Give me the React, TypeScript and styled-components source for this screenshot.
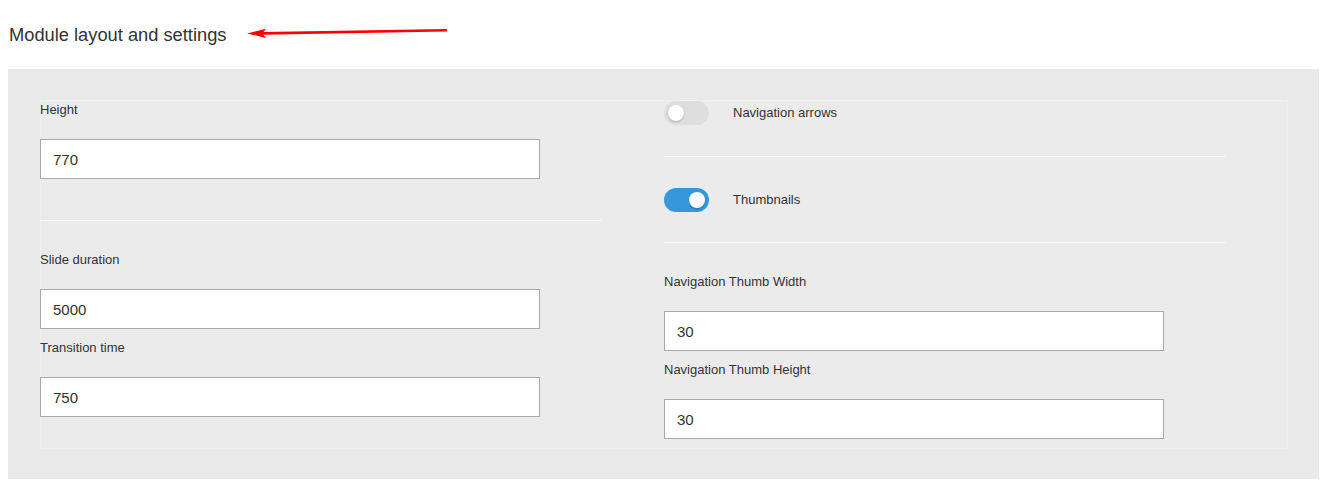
import React from "react";
import styled, { createGlobalStyle } from "styled-components";

const GlobalStyle = createGlobalStyle`
  html, body {
    margin: 0;
    padding: 0;
    background: #ffffff;
  }
  body {
    font-family: "Liberation Sans", Arial, Helvetica, sans-serif;
    color: #333333;
  }
`;

const Page = styled.div`
  padding: 24px 16px 0 8px;
`;

const HeaderRow = styled.div`
  display: flex;
  align-items: flex-start;
  margin-bottom: 24px;
`;

const Title = styled.h2`
  margin: 0;
  font-size: 18.3px;
  line-height: 21px;
  font-weight: 400;
  color: #333333;
  padding-left: 1px;
`;

const ArrowSvg = styled.svg`
  display: block;
  margin-top: 3px;
  margin-left: 20px;
  flex: none;
`;

const OuterPanel = styled.section`
  background: #e9e9e9;
  padding: 31px 31px 30px 32px;
`;

const InnerPanel = styled.div`
  background: #ebebeb;
  box-shadow: inset 0 0 0 1px #efefef;
  display: grid;
  grid-template-columns: 1fr 1fr;
  align-items: start;
  padding-bottom: 1px;
`;

const Column = styled.div`
  padding-right: 62px;
  display: flex;
  flex-direction: column;
`;

const Field = styled.div`
  display: flex;
  flex-direction: column;
  margin-bottom: 9px;
`;

const Label = styled.label`
  font-size: 13px;
  line-height: 20px;
  color: #333333;
  margin-bottom: 19px;
`;

const TextInput = styled.input`
  box-sizing: border-box;
  width: 500px;
  height: 40px;
  border: 1px solid #a9a9a9;
  border-radius: 0;
  background: #ffffff;
  padding: 0 12px;
  font-family: "Liberation Sans", Arial, Helvetica, sans-serif;
  font-size: 15px;
  color: #333333;
  outline: none;
`;

const Divider = styled.hr<{ $top: number; $bottom: number }>`
  border: none;
  height: 1px;
  background: #f7f7f7;
  margin: ${(p) => p.$top}px 0 ${(p) => p.$bottom}px;
  width: 100%;
`;

const ToggleRow = styled.div`
  display: flex;
  align-items: center;
  height: 25px;
  gap: 24px;
`;

const Switch = styled.span<{ $on: boolean }>`
  position: relative;
  display: inline-block;
  width: 45px;
  height: 24px;
  border-radius: 12px;
  background: ${(p) => (p.$on ? "#3498db" : "#dedede")};
  flex: none;

  &::after {
    content: "";
    position: absolute;
    top: 4px;
    left: ${(p) => (p.$on ? "25px" : "4px")};
    width: 16px;
    height: 16px;
    border-radius: 50%;
    background: #ffffff;
    box-shadow: 0 1px 2px rgba(0, 0, 0, 0.25);
  }
`;

const ToggleLabel = styled.span`
  font-size: 13px;
  line-height: 20px;
  color: #333333;
`;

function InputField({ label, value }: { label: string; value: string }) {
  return (
    <Field>
      <Label>{label}</Label>
      <TextInput defaultValue={value} />
    </Field>
  );
}

function Toggle({ label, on }: { label: string; on: boolean }) {
  return (
    <ToggleRow>
      <Switch $on={on} />
      <ToggleLabel>{label}</ToggleLabel>
    </ToggleRow>
  );
}

export default function App() {
  return (
    <>
      <GlobalStyle />
      <Page>
        <HeaderRow>
          <Title>Module layout and settings</Title>
          <ArrowSvg width="202" height="14" viewBox="0 0 202 14">
            <path d="M17 6.4 L200 3.2" stroke="#ff0000" strokeWidth="2.6" strokeLinecap="round" fill="none" />
            <polygon points="1,6.4 20,1.8 16.5,6.4 20,11" fill="#ff0000" />
          </ArrowSvg>
        </HeaderRow>
        <OuterPanel>
          <InnerPanel>
            <Column>
              <InputField label="Height" value="770" />
              <Divider $top={32} $bottom={29} />
              <InputField label="Slide duration" value="5000" />
              <InputField label="Transition time" value="750" />
            </Column>
            <Column>
              <Toggle label="Navigation arrows" on={false} />
              <Divider $top={31} $bottom={30} />
              <Toggle label="Thumbnails" on={true} />
              <Divider $top={30} $bottom={29} />
              <InputField label="Navigation Thumb Width" value="30" />
              <InputField label="Navigation Thumb Height" value="30" />
            </Column>
          </InnerPanel>
        </OuterPanel>
      </Page>
    </>
  );
}
